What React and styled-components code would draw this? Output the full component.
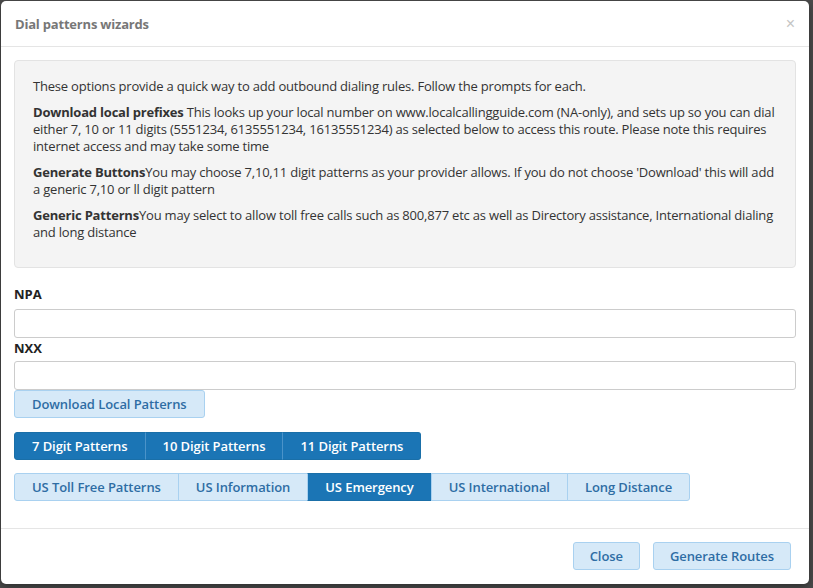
import React, { useState } from "react";
import styled, { createGlobalStyle } from "styled-components";

const GlobalStyle = createGlobalStyle`
  html, body {
    margin: 0;
    padding: 0;
    background: #4b4b4b;
    font-family: "Open Sans", "Liberation Sans", sans-serif;
  }
  * { box-sizing: border-box; }
`;

const Backdrop = styled.div`
  width: 813px;
  height: 588px;
  padding: 1px 0 0 1px;
  background: #4b4b4b;
`;

const Modal = styled.div`
  width: 808px;
  height: 583px;
  background: #fff;
  border-radius: 5px;
  display: flex;
  flex-direction: column;
  box-shadow: 0 3px 9px rgba(0, 0, 0, 0.4);
`;

const Header = styled.div`
  height: 46px;
  border-bottom: 1px solid #e5e5e5;
  display: flex;
  align-items: center;
  justify-content: space-between;
  padding: 0 14px;
`;

const Title = styled.h4`
  margin: 0;
  font-size: 13px;
  font-weight: 700;
  color: #777;
  letter-spacing: -0.2px;
`;

const CloseX = styled.button`
  border: none;
  background: none;
  padding: 0;
  font-size: 16px;
  color: #c4c4c4;
  font-family: "Liberation Sans", sans-serif;
  line-height: 1;
  cursor: pointer;
`;

const Body = styled.div`
  flex: 1;
  padding: 13px 13px 0 13px;
  display: flex;
  flex-direction: column;
`;

const Well = styled.div`
  background: #f4f4f4;
  border: 1px solid #e3e3e3;
  border-radius: 4px;
  padding: 17px 18px 16px 18px;
  min-height: 208px;
  margin-bottom: 18px;
  font-size: 13px;
  line-height: 17px;
  letter-spacing: -0.2px;
  color: #333;
`;

const Para = styled.p`
  margin: 0 0 9px;
`;

const Label = styled.label`
  display: block;
  font-size: 13px;
  font-weight: 700;
  color: #222;
  margin-bottom: ${(p) => p.$mb ?? 6}px;
  line-height: 16px;
`;

const Input = styled.input`
  display: block;
  width: 100%;
  height: 29px;
  border: 1px solid #ccc;
  border-radius: 3px;
  padding: 4px 8px;
  font-size: 13px;
  font-family: inherit;
  margin-bottom: 2px;
  &:focus { outline: none; border-color: #66afe9; }
`;

const Button = styled.button`
  height: 28px;
  padding: 0 17px;
  font-family: "Open Sans", sans-serif;
  font-size: 13px;
  font-weight: 600;
  letter-spacing: -0.08px;
  border: 1px solid ${(p) => (p.$active ? "#1a6fa8" : "#a9d1f0")};
  background: ${(p) => (p.$active ? "#1b75b5" : "#d6e9f8")};
  color: ${(p) => (p.$active ? "#fff" : "#2e6da4")};
  border-radius: 3px;
  cursor: pointer;
  white-space: nowrap;
`;

const Group = styled.div`
  display: inline-flex;
  align-self: flex-start;
  margin-bottom: ${(p) => p.$mb || 0}px;

  & > ${Button} {
    border-radius: 0;
    margin-left: -1px;
  }
  & > ${Button}:first-child {
    margin-left: 0;
    border-radius: 3px 0 0 3px;
  }
  & > ${Button}:last-child {
    border-radius: 0 3px 3px 0;
  }
  & > ${Button} + ${Button} {
    border-left-color: ${(p) => (p.$dark ? "#4b93c9" : "#a9d1f0")};
  }
`;

const DownloadRow = styled.div`
  margin-top: -2px;
  margin-bottom: 14px;
  align-self: flex-start;
`;

const Footer = styled.div`
  height: 56px;
  border-top: 1px solid #e5e5e5;
  display: flex;
  justify-content: flex-end;
  align-items: center;
  gap: 13px;
  padding: 0 18px 2px 0;
`;

const FooterButton = styled(Button)`
  padding: 0 16px;
`;

export default function App() {
  const [digits, setDigits] = useState(null);
  const [generic, setGeneric] = useState("US Emergency");

  return (
    <Backdrop>
      <GlobalStyle />
      <Modal>
        <Header>
          <Title>Dial patterns wizards</Title>
          <CloseX>×</CloseX>
        </Header>
        <Body>
          <Well>
            <Para>
              These options provide a quick way to add outbound dialing rules. Follow the prompts for each.
            </Para>
            <Para>
              <b>Download local prefixes</b> This looks up your local number on www.localcallingguide.com
              (NA-only), and sets up so you can dial either 7, 10 or 11 digits (5551234, 6135551234,
              16135551234) as selected below to access this route. Please note this requires internet
              access and may take some time
            </Para>
            <Para>
              <b>Generate Buttons</b>You may choose 7,10,11 digit patterns as your provider allows. If you
              do not choose 'Download' this will add a generic 7,10 or ll digit pattern
            </Para>
            <Para>
              <b>Generic Patterns</b>You may select to allow toll free calls such as 800,877 etc as well as
              Directory assistance, International dialing and long distance
            </Para>
          </Well>
          <Label htmlFor="npa" $mb={7}>NPA</Label>
          <Input id="npa" />
          <Label htmlFor="nxx" $mb={5}>NXX</Label>
          <Input id="nxx" />
          <DownloadRow>
            <Button>Download Local Patterns</Button>
          </DownloadRow>
          <Group $mb={13} $dark>
            {["7 Digit Patterns", "10 Digit Patterns", "11 Digit Patterns"].map((t) => (
              <Button key={t} $active onClick={() => setDigits(t)}>
                {t}
              </Button>
            ))}
          </Group>
          <Group>
            {["US Toll Free Patterns", "US Information", "US Emergency", "US International", "Long Distance"].map(
              (t) => (
                <Button key={t} $active={generic === t} onClick={() => setGeneric(t)}>
                  {t}
                </Button>
              )
            )}
          </Group>
        </Body>
        <Footer>
          <FooterButton>Close</FooterButton>
          <FooterButton>Generate Routes</FooterButton>
        </Footer>
      </Modal>
    </Backdrop>
  );
}
